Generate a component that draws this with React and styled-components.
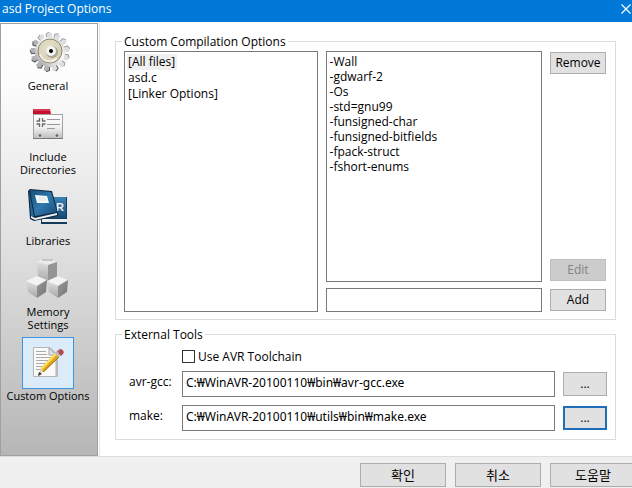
import React, { useState } from "react";
import styled, { createGlobalStyle, css } from "styled-components";

const GlobalStyle = createGlobalStyle`
  *, *::before, *::after { box-sizing: border-box; }
  body {
    margin: 0;
    background: #f0f0f0;
    color: #000;
    font-family: "Open Sans", "Noto Sans CJK KR", sans-serif;
    font-size: 12px;
    line-height: 16px;
  }
  button, input { font: inherit; color: inherit; }
`;

const Dialog = styled.div`
  display: flex;
  flex-direction: column;
  min-height: 100vh;
  overflow: hidden;
`;

const TitleBar = styled.header`
  display: flex;
  align-items: center;
  justify-content: space-between;
  height: 22px;
  padding-left: 2px;
  background: #0078d7;
  color: #fff;
`;

const Title = styled.h1`
  margin: 0;
  padding-bottom: 4px;
  font-size: 12px;
  font-weight: 400;
`;

const CloseButton = styled.button`
  display: flex;
  width: 12px;
  height: 18px;
  padding: 2px 0;
  border: 0;
  background: none;
  overflow: hidden;

  svg { flex: none; }
`;

const Body = styled.main`
  display: flex;
  flex: 1;
  background: #fff;
  border-bottom: 1px solid #dcdcdc;
`;

const Sidebar = styled.nav`
  display: flex;
  flex: none;
  flex-direction: column;
  align-items: center;
  gap: 6px;
  width: 98px;
  margin-top: 1px;
  padding: 3px 2px 3px 0;
  border: 1px solid #a0a0a0;
  background: linear-gradient(#fff 0%, #fcfcfc 14%, #d9d9d9 60%, #b6b6b6 100%);
`;

const SideItem = styled.button`
  display: flex;
  flex-direction: column;
  align-items: center;
  padding: 0;
  border: 0;
  background: none;
  font-size: 11px;
  line-height: 13px;
  white-space: pre-line;
`;

const IconCell = styled.span`
  display: flex;
  width: 52px;
  height: 52px;
  ${(p) =>
    p.$selected &&
    css`
      background: #dcebfa;
      box-shadow: inset 0 0 0 1px #3c96e6;
    `}
`;

const Page = styled.div`
  display: flex;
  flex: 1;
  flex-direction: column;
  gap: 7px;
  min-width: 0;
  margin-left: 1px;
  padding: 12px 16px 16px 15px;
  border-left: 1px solid #e4e4e4;
`;

const Group = styled.fieldset`
  min-width: 0;
  margin: 0;
  padding: 2px 9px 7px 8px;
  border: 1px solid #dcdcdc;
`;

const CompileGroup = styled(Group)`
  display: flex;
  flex: 1;
  flex-direction: column;
`;

const ToolsGroup = styled(Group)`
  padding: 8px;
`;

const Legend = styled.legend`
  margin-left: -2px;
  padding: 0 2px;
  line-height: 15px;
`;

const CompileGrid = styled.div`
  display: grid;
  flex: 1;
  grid-template-columns: 194fr 217fr 56px;
  column-gap: 8px;
`;

const Column = styled.div`
  display: flex;
  flex-direction: column;
  gap: 6px;
  min-width: 0;
`;

const ButtonColumn = styled.div`
  display: flex;
  flex-direction: column;
  gap: 8px;
  padding: 1px 0;
`;

const Spacer = styled.span`
  flex: 1;
`;

const ListBox = styled.ul`
  flex: 1;
  margin: 0;
  padding: 2px;
  border: 1px solid #7a7a7a;
  background: #fff;
  list-style: none;
  line-height: ${(p) => p.$row}px;
`;

const ListItem = styled.li`
  width: fit-content;
  padding: 0 2px 0 1px;
  background: ${(p) => (p.$selected ? "#f0f0f0" : "none")};
`;

const TextField = styled.input`
  width: 100%;
  min-width: 0;
  height: ${(p) => (p.$tall ? 26 : 24)}px;
  margin: 0;
  padding: 0 3px 4px;
  border: 1px solid #7a7a7a;
  border-radius: 0;
  background: #fff;
  font-family: "Noto Sans", "Noto Sans CJK KR", sans-serif;
  outline: none;
`;

const Button = styled.button`
  height: ${(p) => (p.$tall ? 24 : 22)}px;
  padding: 0;
  border: 1px solid #adadad;
  border-radius: 0;
  background: #e1e1e1;
  line-height: 16px;

  &:disabled {
    border-color: #bfbfbf;
    background: #ccc;
    color: #838383;
  }

  ${(p) =>
    p.$focused &&
    css`
      border: 2px solid #1c6fb8;
    `}
`;

const ToolsGrid = styled.div`
  display: grid;
  grid-template-columns: 45px 1fr 44px;
  align-items: center;
  column-gap: 8px;
  row-gap: 8px;
  padding-left: 5px;
`;

const FieldLabel = styled.label`
  line-height: 16px;
  white-space: nowrap;
  padding-bottom: 4px;
`;

const CheckRow = styled.label`
  display: flex;
  grid-column: 2 / -1;
  align-items: center;
  gap: 3px;
  height: 13px;
`;

const CheckBox = styled.input`
  appearance: none;
  width: 13px;
  height: 13px;
  margin: 0;
  border: 1px solid #333;
  background: #fff;

  &:checked { background: #0078d7; box-shadow: inset 0 0 0 2px #fff; }
`;

const Footer = styled.footer`
  display: flex;
  justify-content: flex-end;
  gap: 9px;
  margin-right: -4px;
  padding: 6px 0 1px;
  background: #f0f0f0;
`;

const FooterButton = styled(Button)`
  flex: none;
  width: 86px;
  font-family: "Noto Sans CJK KR", sans-serif;
  font-size: 13px;
`;

function CloseIcon() {
  return (
    <svg width="12" height="10" viewBox="0 0 12 10" stroke="#fff" strokeWidth="1.2" fill="none" aria-hidden="true">
      <path d="M1.500 0.5 10.500 9.5M10.500 0.5 1.500 9.5" />
    </svg>
  );
}

function Drawing({ children }) {
  return (
    <svg width="52" height="52" viewBox="0 0 52 52" aria-hidden="true">
      {children}
    </svg>
  );
}

function GearIcon() {
  const teeth = Array.from({ length: 13 }, (_, i) => (i * 360) / 13);
  return (
    <Drawing>
      <defs>
        <linearGradient id="gearMetal" x1="0" y1="1" x2="1" y2="0">
          <stop offset="0" stopColor="#8f8f94" />
          <stop offset=".35" stopColor="#dcdcde" />
          <stop offset=".65" stopColor="#fafafa" />
          <stop offset="1" stopColor="#c4c4c7" />
        </linearGradient>
        <radialGradient id="gearFace" cx=".45" cy=".35" r=".8">
          <stop offset="0" stopColor="#e6e2cc" />
          <stop offset=".7" stopColor="#d5d0b4" />
          <stop offset="1" stopColor="#b9b393" />
        </radialGradient>
      </defs>
      {teeth.map((a, i) => (
        <g key={a} transform={`rotate(${a} 28 25)`}>
          <path d="M25 12 24 7 27 5 30 6 30 12z" fill={i > 6 && i < 12 ? "#b2b2b6" : "#dedee0"} />
          <path d="M25 11 24 7 27 5" stroke={i > 5 && i < 12 ? "#55555a" : "#a0a0a4"} fill="none" />
        </g>
      ))}
      <circle cx="28" cy="25" r="15" fill="url(#gearMetal)" />
      <circle cx="28" cy="24" r="12" fill="url(#gearFace)" stroke="#8b876f" />
      <path d="M18 27a10 10 0 0 0 17 4" stroke="#f2efe2" strokeWidth="2" fill="none" />
      <circle cx="30" cy="25" r="6" fill="#aaa68f" />
      <circle cx="29" cy="24" r="5" fill="#f4f4f2" />
      <circle cx="29" cy="24" r="2" fill="#050505" />
    </Drawing>
  );
}

function IncludeIcon() {
  return (
    <Drawing>
      <defs>
        <linearGradient id="board" x1="0" y1="0" x2="0" y2="1">
          <stop offset="0" stopColor="#fff" />
          <stop offset=".55" stopColor="#f0f0f0" />
          <stop offset="1" stopColor="#bdbdbd" />
        </linearGradient>
      </defs>
      <path d="M11 17V12q0-1 1-1H28l1 5v2z" fill="#c8102e" />
      <path d="M12 12h16" stroke="#e06878" />
      <rect x="11.500" y="16.500" width="29" height="24" fill="url(#board)" stroke="#a2a2a2" />
      <path d="M11 40.500h30" stroke="#777" />
      <path d="M17.500 20v3h-3M20.500 20v3h3M14.500 26h3v3M23.500 26h-3v3" stroke="#666" fill="none" strokeWidth="1.300" />
      <path d="M25 21.500h13M25 26.500h13M25 30.500h8" stroke="#999" />
      <circle cx="18" cy="37.500" r="2" fill="#6d6d6d" stroke="#ddd" />
      <circle cx="35" cy="37.500" r="2" fill="#6d6d6d" stroke="#ddd" />
    </Drawing>
  );
}

function LibrariesIcon() {
  return (
    <Drawing>
      <defs>
        <linearGradient id="coverFront" x1="0" y1="0" x2="1" y2="1">
          <stop offset="0" stopColor="#174d79" />
          <stop offset=".5" stopColor="#3079ae" />
          <stop offset="1" stopColor="#174a75" />
        </linearGradient>
        <linearGradient id="coverBack" x1="0" y1="0" x2="0" y2="1">
          <stop offset="0" stopColor="#3b83b5" />
          <stop offset="1" stopColor="#174a75" />
        </linearGradient>
      </defs>
      <path d="M19 15H45V42H19z" fill="#143b5c" />
      <path d="M28 15H44V36H20V30z" fill="url(#coverBack)" />
      <path d="M20 37H45V40H20z" fill="#e9edf0" />
      <text x="34" y="29" fill="#e8f2f8" fontFamily="Liberation Sans, sans-serif" fontSize="11" fontWeight="700">R</text>
      <path d="M6 9 8 7 30 9 36 31 36 34 12 39 8 37z" fill="#0d2a42" />
      <path d="M8 8 29 10 35 30 13 34z" fill="url(#coverFront)" />
      <path d="M7 9 12 34 9 35z" fill="#2a648f" />
      <path d="M9 34 13 36 35 31v2L13 38 9 36z" fill="#eef1f3" />
      <path d="M13 13 25 14 27 21 15 21z" fill="#f5f8fa" />
      <path d="M16 16h8M16 18h8" stroke="#d7e1e8" />
    </Drawing>
  );
}

function Cube({ x, y }) {
  return (
    <g transform={`translate(${x} ${y})`}>
      <path d="M0 6 11 1 21 5 11 11z" fill="#f3f3f3" />
      <path d="M0 6 11 11 11 23 2 17z" fill="url(#cubeLeft)" />
      <path d="M11 11 21 5 20 17 11 23z" fill="url(#cubeRight)" />
    </g>
  );
}

function MemoryIcon() {
  return (
    <Drawing>
      <defs>
        <linearGradient id="cubeLeft" x1="0" y1="0" x2="0" y2="1">
          <stop offset="0" stopColor="#dedede" />
          <stop offset="1" stopColor="#a8a8a8" />
        </linearGradient>
        <linearGradient id="cubeRight" x1="0" y1="0" x2="1" y2="1">
          <stop offset="0" stopColor="#9a9a9a" />
          <stop offset="1" stopColor="#737373" />
        </linearGradient>
      </defs>
      <path d="M15 9 20 6H30L35 9 26 12z" fill="#ececec" />
      <path d="M20 7h11" stroke="#a0a0a0" />
      <path d="M15 9 26 12V29L16 24z" fill="url(#cubeLeft)" />
      <path d="M26 12 35 9V24L26 29z" fill="#959595" />
      <Cube x={4} y={22} />
      <Cube x={25} y={22} />
    </Drawing>
  );
}

function NoteIcon() {
  return (
    <Drawing>
      <path d="M12 11H29L36 18V40H12z" fill="#bdbdbd" />
      <path d="M11.500 10.500H28L34 17V39.500H11.500z" fill="#fafafa" stroke="#b5b5b5" />
      <path d="M27 11V18H34z" fill="#dde3ea" stroke="#a8a8a8" />
      <path d="M14 14.500h10M14 17.500h11M14 20.500h17M14 23.500h15M14 26.500h12M14 29.500h9M14 32.500h6" stroke="#a9a9a9" />
      <path d="M17 38 19 31 22 34z" fill="#e9cda4" />
      <path d="M16 39 17 35 20 37z" fill="#333" />
      <path d="M19 31 33 16 37 20 22 35z" fill="#e2a91c" />
      <path d="M19 31 33 16 35 17 20 33z" fill="#ffe068" />
      <path d="M21 35 37 20" stroke="#987014" />
      <path d="M33 16 35 14 39 18 37 20z" fill="#b8bcc2" />
      <path d="M35 14Q38 11 40 12.500 43 15 41 17L39 19z" fill="#ad4d4b" />
      <path d="M36 14 38 13" stroke="#dc9490" />
    </Drawing>
  );
}

const sections = [
  { label: "General", Icon: GearIcon },
  { label: "Include\nDirectories", Icon: IncludeIcon },
  { label: "Libraries", Icon: LibrariesIcon },
  { label: "Memory\nSettings", Icon: MemoryIcon },
  { label: "Custom Options", Icon: NoteIcon, selected: true },
];

const files = ["[All files]", "asd.c", "[Linker Options]"];

const flags = [
  "-Wall",
  "-gdwarf-2",
  "-Os",
  "-std=gnu99",
  "-funsigned-char",
  "-funsigned-bitfields",
  "-fpack-struct",
  "-fshort-enums",
];

const tools = [
  { id: "avr-gcc", path: "C:₩WinAVR-20100110₩bin₩avr-gcc.exe" },
  { id: "make", path: "C:₩WinAVR-20100110₩utils₩bin₩make.exe", focused: true },
];

export default function App() {
  const [file, setFile] = useState(files[0]);

  return (
    <Dialog>
      <GlobalStyle />
      <TitleBar>
        <Title>asd Project Options</Title>
        <CloseButton type="button" aria-label="Close">
          <CloseIcon />
        </CloseButton>
      </TitleBar>

      <Body>
        <Sidebar aria-label="Sections">
          {sections.map(({ label, Icon, selected }) => (
            <SideItem key={label} type="button" aria-current={selected ? "page" : undefined}>
              <IconCell $selected={selected}>
                <Icon />
              </IconCell>
              {label}
            </SideItem>
          ))}
        </Sidebar>

        <Page>
          <CompileGroup>
            <Legend>Custom Compilation Options</Legend>
            <CompileGrid>
              <ListBox role="listbox" aria-label="Files" $row={16}>
                {files.map((name) => (
                  <ListItem
                    key={name}
                    role="option"
                    aria-selected={name === file}
                    $selected={name === file}
                    onClick={() => setFile(name)}
                  >
                    {name}
                  </ListItem>
                ))}
              </ListBox>
              <Column>
                <ListBox role="listbox" aria-label="Options" $row={15}>
                  {flags.map((flag) => (
                    <ListItem key={flag} role="option" aria-selected="false">
                      {flag}
                    </ListItem>
                  ))}
                </ListBox>
                <TextField type="text" aria-label="New option" />
              </Column>
              <ButtonColumn>
                <Button type="button">Remove</Button>
                <Spacer />
                <Button type="button" disabled>Edit</Button>
                <Button type="button">Add</Button>
              </ButtonColumn>
            </CompileGrid>
          </CompileGroup>

          <ToolsGroup>
            <Legend>External Tools</Legend>
            <ToolsGrid>
              <CheckRow>
                <CheckBox type="checkbox" />
                Use AVR Toolchain
              </CheckRow>
              {tools.map(({ id, path, focused }) => (
                <React.Fragment key={id}>
                  <FieldLabel htmlFor={id}>{id}:</FieldLabel>
                  <TextField id={id} type="text" defaultValue={path} $tall />
                  <Button type="button" aria-label={`Browse for ${id}`} $tall $focused={focused}>
                    ...
                  </Button>
                </React.Fragment>
              ))}
            </ToolsGrid>
          </ToolsGroup>
        </Page>
      </Body>

      <Footer>
        <FooterButton type="button" $tall>확인</FooterButton>
        <FooterButton type="button" $tall>취소</FooterButton>
        <FooterButton type="button" $tall>도움말</FooterButton>
      </Footer>
    </Dialog>
  );
}
